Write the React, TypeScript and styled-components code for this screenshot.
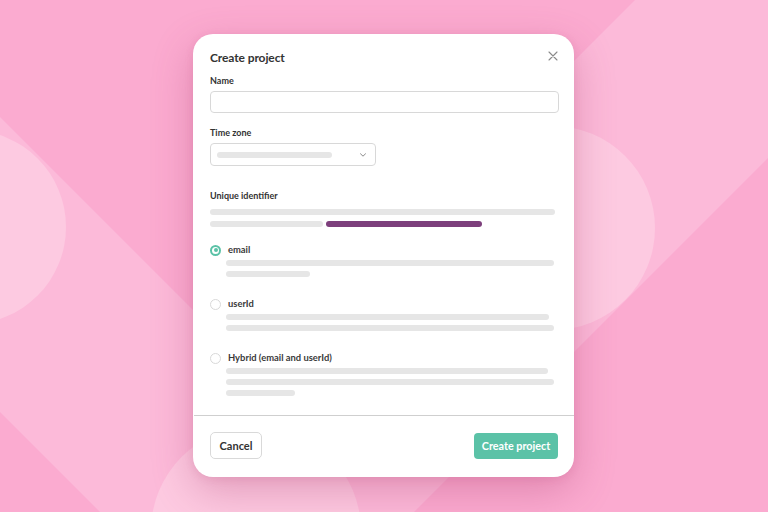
import React from "react";
import styled, { createGlobalStyle } from "styled-components";

const GlobalStyle = createGlobalStyle`
  * { box-sizing: border-box; }
  html, body { margin: 0; padding: 0; }
  body {
    font-family: "Lato", "Noto Sans", sans-serif;
    background: #fbabd0;
    overflow: hidden;
  }
`;

const Page = styled.div`
  position: relative;
  width: 768px;
  height: 512px;
  display: flex;
  align-items: center;
  justify-content: center;
  overflow: hidden;
`;

const Backdrop = styled.svg`
  position: absolute;
  inset: 0;
  width: 768px;
  height: 512px;
  z-index: 0;
`;

const Card = styled.div`
  position: relative;
  z-index: 1;
  width: 381px;
  height: 443px;
  margin-top: -1px;
  margin-right: 1px;
  background: #ffffff;
  border-radius: 20px;
  box-shadow: 0 14px 40px rgba(170, 60, 110, 0.33), 0 2px 8px rgba(170, 60, 110, 0.12);
  display: flex;
  flex-direction: column;
  overflow: hidden;
`;

const Body = styled.div`
  flex: 1;
  display: flex;
  flex-direction: column;
  padding: 16px 15px 0 17px;
`;

const Title = styled.h1`
  margin: 0;
  font-size: 12px;
  line-height: 16px;
  font-weight: 700;
  color: #333333;
  letter-spacing: -0.1px;
`;

const CloseButton = styled.button`
  position: absolute;
  top: 16px;
  right: 15px;
  width: 12px;
  height: 12px;
  padding: 0;
  border: 0;
  background: transparent;
  display: flex;
  align-items: center;
  justify-content: center;
  cursor: pointer;
`;

const Label = styled.div<{ $mt: number }>`
  margin-top: ${(p) => p.$mt}px;
  font-size: 9px;
  line-height: 12px;
  font-weight: 700;
  color: #333333;
`;

const Input = styled.div`
  margin-top: 4px;
  width: 349px;
  height: 22px;
  border: 1px solid #d8d8d8;
  border-radius: 4px;
  background: #fff;
`;

const Select = styled.div`
  margin-top: 4px;
  width: 166px;
  height: 23px;
  border: 1px solid #d8d8d8;
  border-radius: 4px;
  background: #fff;
  display: flex;
  align-items: center;
  padding: 0 8px 0 6px;
  gap: 8px;
`;

const Bar = styled.div<{ $w: number; $color?: string }>`
  width: ${(p) => p.$w}px;
  height: 6px;
  border-radius: 3px;
  background: ${(p) => p.$color ?? "#e6e6e6"};
  flex: none;
`;

const BarRow = styled.div`
  display: flex;
  gap: 3px;
`;

const BarStack = styled.div<{ $mt: number }>`
  display: flex;
  flex-direction: column;
  gap: 6px;
  margin-top: ${(p) => p.$mt}px;
`;

const Chevron = styled.svg`
  margin-left: auto;
  flex: none;
`;

const OptionHead = styled.div<{ $mt: number }>`
  display: flex;
  align-items: center;
  gap: 7px;
  margin-top: ${(p) => p.$mt}px;
  height: 12px;
`;

const Radio = styled.span<{ $checked?: boolean }>`
  width: 11px;
  height: 11px;
  border-radius: 50%;
  border: ${(p) => (p.$checked ? "2px solid #5bc2a7" : "1px solid #d9d9d9")};
  display: flex;
  align-items: center;
  justify-content: center;
  flex: none;
  background: #fff;
  &::after {
    content: "";
    display: ${(p) => (p.$checked ? "block" : "none")};
    width: 4px;
    height: 4px;
    border-radius: 50%;
    background: #5bc2a7;
  }
`;

const OptionLabel = styled.span`
  font-size: 9.4px;
  line-height: 12px;
  font-weight: 700;
  color: #3a3a3a;
`;

const OptionBars = styled.div`
  display: flex;
  flex-direction: column;
  gap: 5px;
  margin-top: 4px;
  margin-left: 16px;
`;

const Divider = styled.div`
  height: 1px;
  background: #cfcfcf;
  margin-left: 1px;
`;

const Footer = styled.div`
  display: flex;
  justify-content: space-between;
  align-items: center;
  padding: 16px 16px 18px 17px;
`;

const CancelButton = styled.button`
  height: 27px;
  width: 52px;
  border: 1px solid #d9d9d9;
  border-radius: 5px;
  background: #fff;
  font-family: inherit;
  font-size: 11px;
  font-weight: 700;
  color: #333;
  padding: 0;
`;

const PrimaryButton = styled.button`
  height: 26px;
  width: 84px;
  border: 0;
  border-radius: 4px;
  background: #5bc2a7;
  font-family: inherit;
  font-size: 10.8px;
  font-weight: 700;
  color: #fff;
  padding: 0;
`;

const options = [
  { label: "email", checked: true, bars: [328, 84], mt: 17 },
  { label: "userId", checked: false, bars: [323, 328], mt: 21 },
  { label: "Hybrid (email and userId)", checked: false, bars: [322, 328, 69], mt: 21 },
];

export default function App() {
  return (
    <>
      <GlobalStyle />
      <Page>
        <Backdrop viewBox="0 0 768 512" aria-hidden="true">
          <rect width="768" height="512" fill="#fbabd0" />
          <polygon points="0,117 395,512 100,512 0,412" fill="#fcbad9" />
          <polygon points="635,0 768,0 768,158 414,512 123,512" fill="#fcbad9" />
          <circle cx="-31" cy="227" r="97" fill="#fdcae1" />
          <circle cx="553" cy="228" r="102" fill="#fdcae1" />
          <circle cx="256" cy="531" r="105" fill="#fdcae1" />
        </Backdrop>
        <Card>
          <CloseButton aria-label="Close">
            <svg width="10" height="10" viewBox="0 0 10 10">
              <path d="M1 1L9 9M9 1L1 9" stroke="#8a8a8a" strokeWidth="1.1" strokeLinecap="round" />
            </svg>
          </CloseButton>
          <Body>
            <Title>Create project</Title>
            <Label $mt={9}>Name</Label>
            <Input />
            <Label $mt={14}>Time zone</Label>
            <Select>
              <Bar $w={115} />
              <Chevron width="8" height="6" viewBox="0 0 8 6">
                <path d="M1.5 1.8L4 4.2L6.5 1.8" stroke="#8a8a8a" strokeWidth="1" fill="none" strokeLinecap="round" />
              </Chevron>
            </Select>
            <Label $mt={24}>Unique identifier</Label>
            <BarStack $mt={7}>
              <Bar $w={345} />
              <BarRow>
                <Bar $w={113} />
                <Bar $w={156} $color="#7d3f7c" />
              </BarRow>
            </BarStack>
            {options.map((o) => (
              <React.Fragment key={o.label}>
                <OptionHead $mt={o.mt}>
                  <Radio $checked={o.checked} />
                  <OptionLabel>{o.label}</OptionLabel>
                </OptionHead>
                <OptionBars>
                  {o.bars.map((w, i) => (
                    <Bar key={i} $w={w} />
                  ))}
                </OptionBars>
              </React.Fragment>
            ))}
          </Body>
          <Divider />
          <Footer>
            <CancelButton>Cancel</CancelButton>
            <PrimaryButton>Create project</PrimaryButton>
          </Footer>
        </Card>
      </Page>
    </>
  );
}
